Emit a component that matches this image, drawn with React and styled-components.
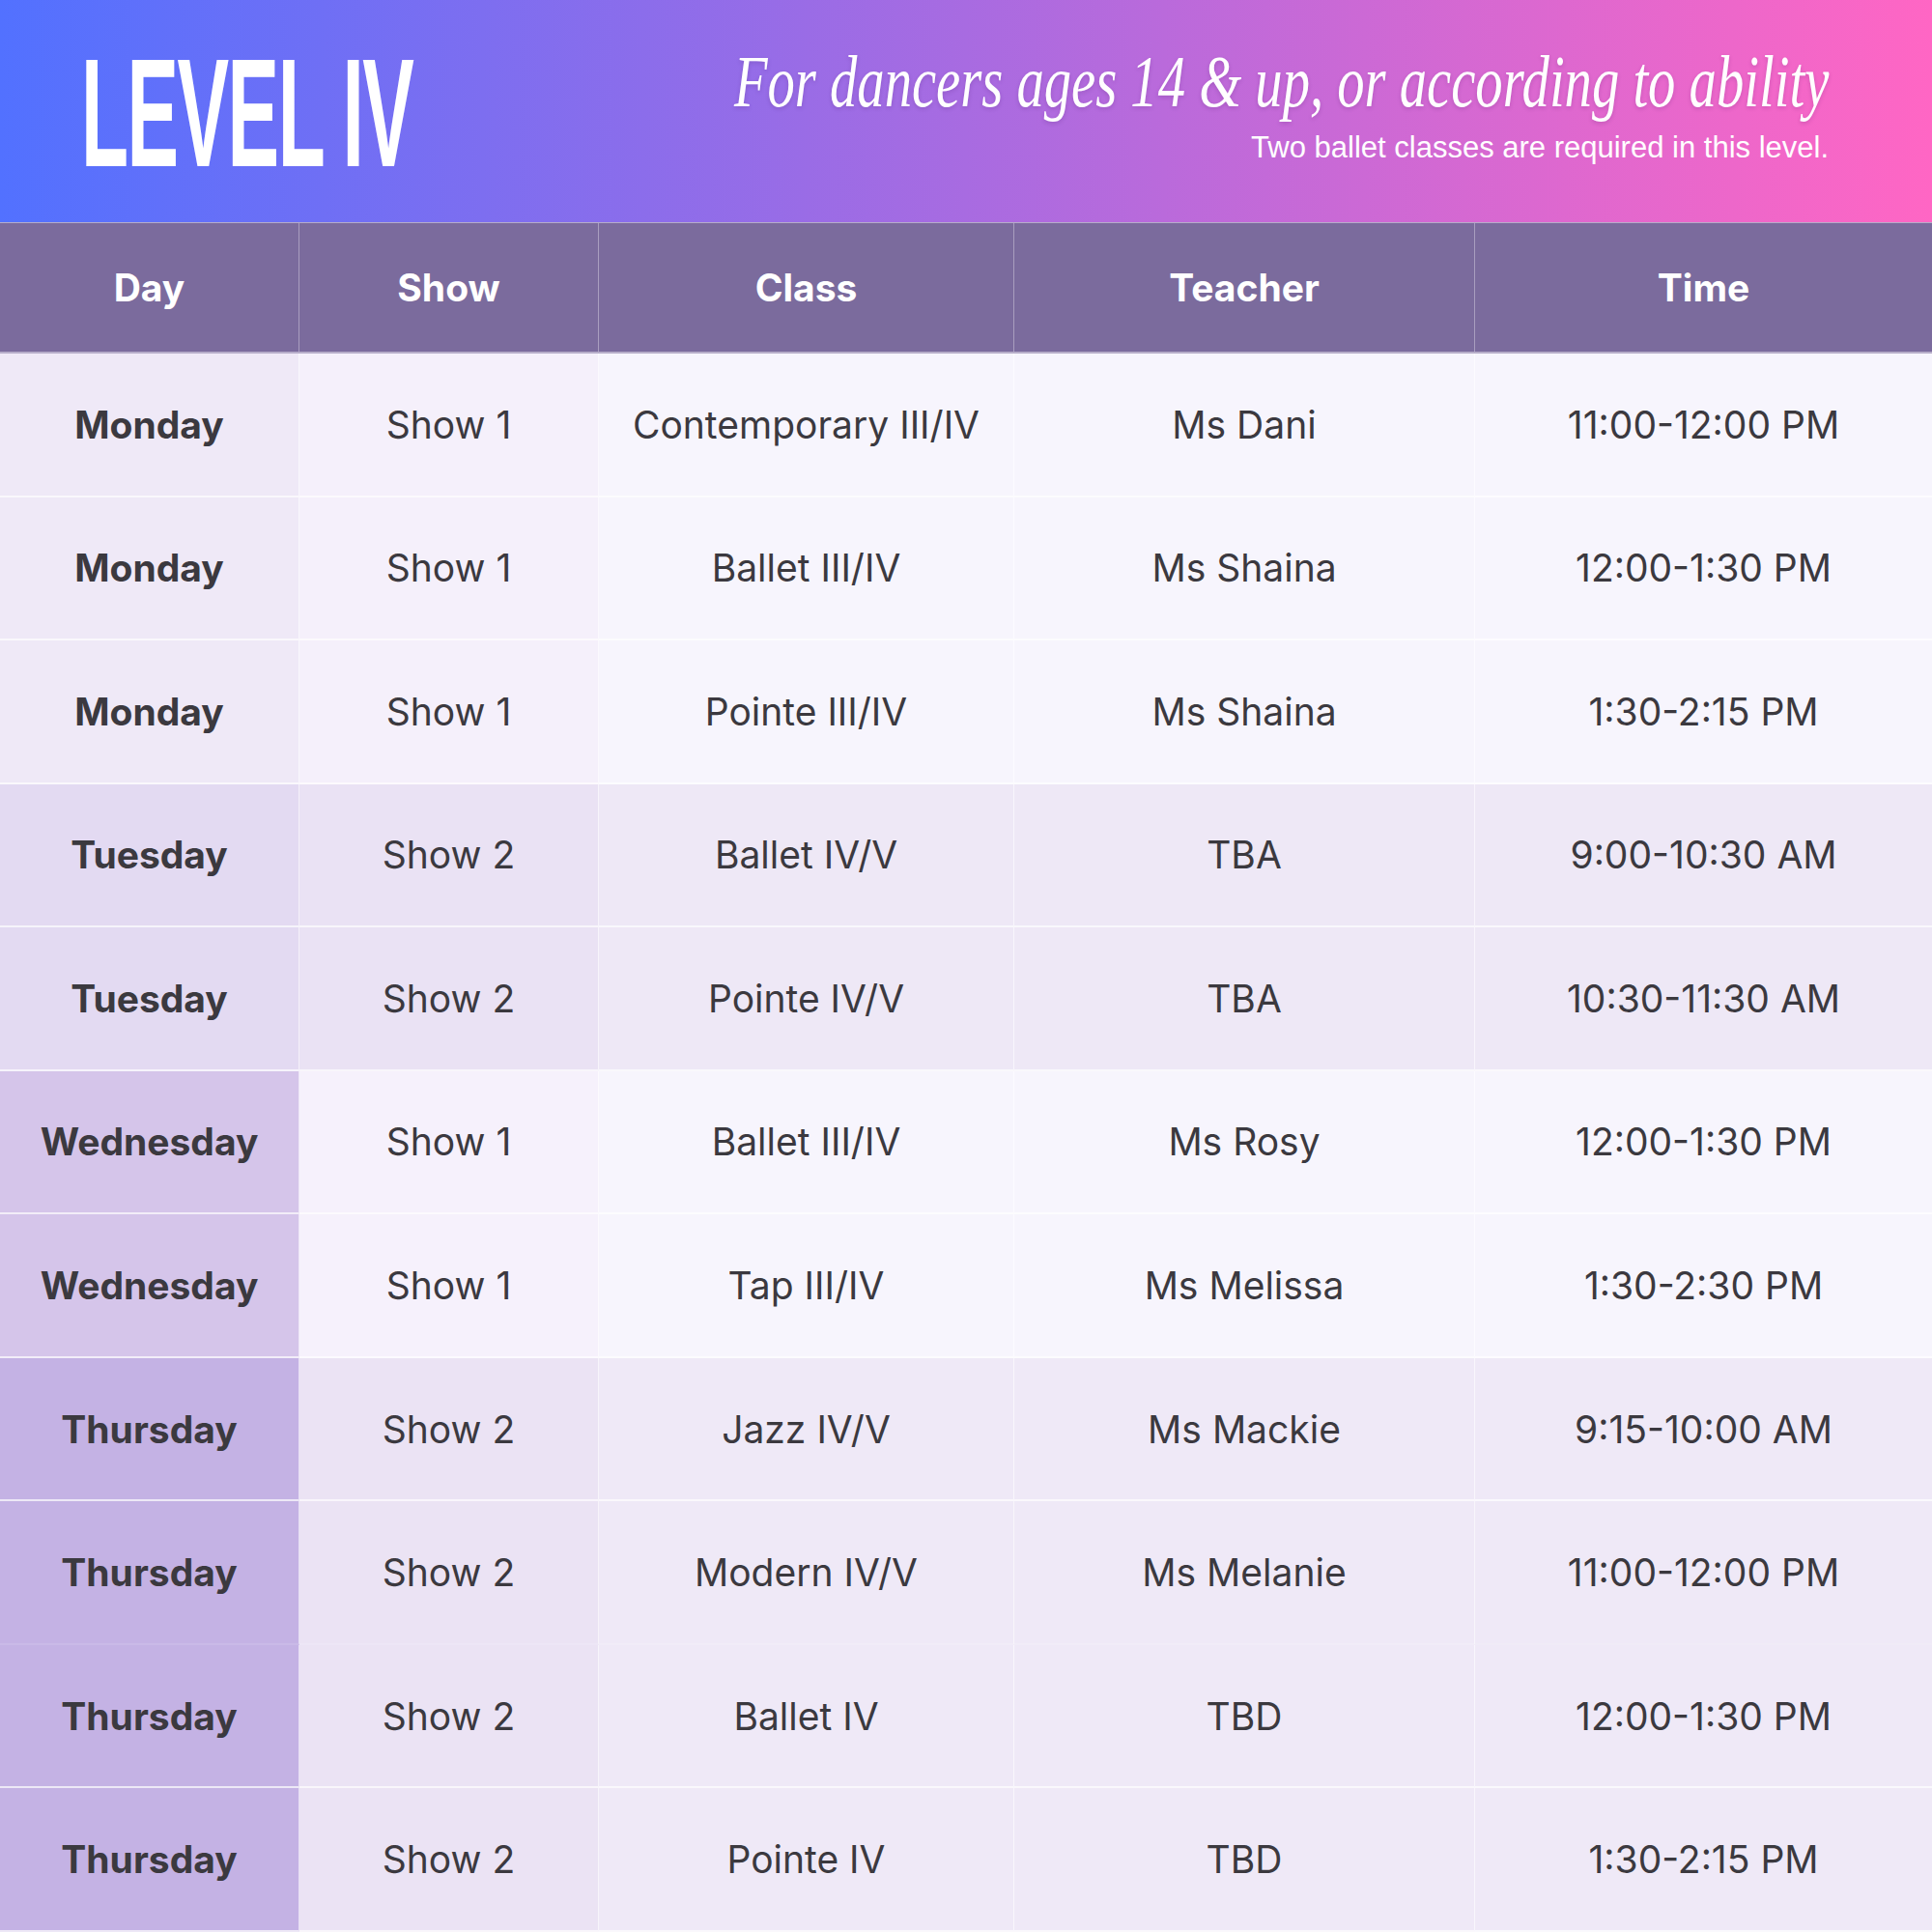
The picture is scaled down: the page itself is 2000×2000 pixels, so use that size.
import React from 'react';
import styled, { createGlobalStyle } from 'styled-components';

const GlobalStyle = createGlobalStyle`
  html, body {
    margin: 0;
    padding: 0;
    background: #ffffff;
  }
  * {
    box-sizing: border-box;
  }
`;

const COLUMNS = '310px 310px 430px 477px 473px';

const TONES = {
  mon: { day: '#efe9f7', show: '#f5f0fb', rest: '#f7f5fd' },
  tue: { day: '#e3daf2', show: '#eae2f4', rest: '#eee8f6' },
  wed: { day: '#d5c5ea', show: '#f6f1fc', rest: '#f7f5fd' },
  thu: { day: '#c4b2e4', show: '#ebe3f4', rest: '#efe9f7' },
};

const HEADINGS = ['Day', 'Show', 'Class', 'Teacher', 'Time'];

const ROWS = [
  { tone: 'mon', cells: ['Monday', 'Show 1', 'Contemporary III/IV', 'Ms Dani', '11:00-12:00 PM'] },
  { tone: 'mon', cells: ['Monday', 'Show 1', 'Ballet III/IV', 'Ms Shaina', '12:00-1:30 PM'] },
  { tone: 'mon', cells: ['Monday', 'Show 1', 'Pointe III/IV', 'Ms Shaina', '1:30-2:15 PM'] },
  { tone: 'tue', cells: ['Tuesday', 'Show 2', 'Ballet IV/V', 'TBA', '9:00-10:30 AM'] },
  { tone: 'tue', cells: ['Tuesday', 'Show 2', 'Pointe IV/V', 'TBA', '10:30-11:30 AM'] },
  { tone: 'wed', cells: ['Wednesday', 'Show 1', 'Ballet III/IV', 'Ms Rosy', '12:00-1:30 PM'] },
  { tone: 'wed', cells: ['Wednesday', 'Show 1', 'Tap III/IV', 'Ms Melissa', '1:30-2:30 PM'] },
  { tone: 'thu', cells: ['Thursday', 'Show 2', 'Jazz IV/V', 'Ms Mackie', '9:15-10:00 AM'] },
  { tone: 'thu', cells: ['Thursday', 'Show 2', 'Modern IV/V', 'Ms Melanie', '11:00-12:00 PM'], seamless: true },
  { tone: 'thu', cells: ['Thursday', 'Show 2', 'Ballet IV', 'TBD', '12:00-1:30 PM'] },
  { tone: 'thu', cells: ['Thursday', 'Show 2', 'Pointe IV', 'TBD', '1:30-2:15 PM'] },
];

const Page = styled.div`
  width: 2000px;
  height: 2000px;
  display: flex;
  flex-direction: column;
  overflow: hidden;
`;

const Banner = styled.header`
  flex: none;
  height: 230px;
  padding: 0 107px 0 84px;
  display: flex;
  align-items: flex-start;
  background: linear-gradient(90deg, #5271ff 0%, #a86be1 50%, #ff66c4 100%);
`;

const TitleBox = styled.div`
  flex: none;
  width: 400px;
`;

const Title = styled.h1`
  margin: 38px 0 0;
  display: inline-block;
  font: 700 159px/1 "Liberation Sans", Arial, sans-serif;
  letter-spacing: -3px;
  color: #ffffff;
  white-space: nowrap;
  transform: scaleX(0.505);
  transform-origin: left top;
`;

const Tagline = styled.div`
  flex: 1;
  min-width: 0;
  display: flex;
  flex-direction: column;
  align-items: flex-end;
  text-align: right;
`;

const Script = styled.p`
  margin: 46px 0 0;
  display: inline-block;
  font: italic 400 76px/1 "Liberation Serif", "Times New Roman", serif;
  color: #ffffff;
  white-space: nowrap;
  text-shadow: 0 2px 5px rgba(60, 20, 90, 0.18);
  transform: scaleX(0.745);
  transform-origin: right top;
`;

const Note = styled.p`
  margin: 15px 0 0;
  font: 400 31px/1 "Liberation Sans", Arial, sans-serif;
  color: #ffffff;
  white-space: nowrap;
`;

const HeadRow = styled.div`
  flex: none;
  height: 136px;
  display: grid;
  grid-template-columns: ${COLUMNS};
  background: #7b6b9d;
  border-top: 1px solid rgba(255, 255, 255, 0.45);
  border-bottom: 2px solid rgba(255, 255, 255, 0.45);
`;

const HeadCell = styled.div`
  display: flex;
  align-items: center;
  justify-content: center;
  font: 700 39px/1 Inter, "Liberation Sans", sans-serif;
  color: #ffffff;
  border-right: 1px solid rgba(255, 255, 255, 0.35);

  &:last-child {
    border-right: none;
  }
`;

const Body = styled.div`
  flex: 1;
  display: grid;
  grid-template-columns: ${COLUMNS};
  grid-auto-rows: 1fr;
`;

const Cell = styled.div`
  display: flex;
  align-items: center;
  justify-content: center;
  background: ${({ $bg }) => $bg};
  font: ${({ $strong }) => ($strong ? 700 : 400)} 39px/1 Inter, "Liberation Sans", sans-serif;
  color: #3b393f;
  white-space: nowrap;
  border-right: 1px solid rgba(255, 255, 255, 0.6);
  border-bottom: 2px solid ${({ $seamless }) => ($seamless ? 'rgba(255, 255, 255, 0.1)' : 'rgba(255, 255, 255, 0.7)')};

  &:nth-child(5n) {
    border-right: none;
  }
`;

const cellColor = (tone, index) => {
  const t = TONES[tone];
  if (index === 0) return t.day;
  if (index === 1) return t.show;
  return t.rest;
};

const App = () => (
  <>
    <GlobalStyle />
    <Page>
      <Banner>
        <TitleBox>
          <Title>LEVEL IV</Title>
        </TitleBox>
        <Tagline>
          <Script>For dancers ages 14 &amp; up, or according to ability</Script>
          <Note>Two ballet classes are required in this level.</Note>
        </Tagline>
      </Banner>
      <HeadRow>
        {HEADINGS.map((h) => (
          <HeadCell key={h}>{h}</HeadCell>
        ))}
      </HeadRow>
      <Body>
        {ROWS.map((row, r) => row.cells.map((text, i) => (
          <Cell
            key={`${r}-${i}`}
            $bg={cellColor(row.tone, i)}
            $strong={i === 0}
            $seamless={row.seamless}
          >
            {text}
          </Cell>
        )))}
      </Body>
    </Page>
  </>
);

export default App;
